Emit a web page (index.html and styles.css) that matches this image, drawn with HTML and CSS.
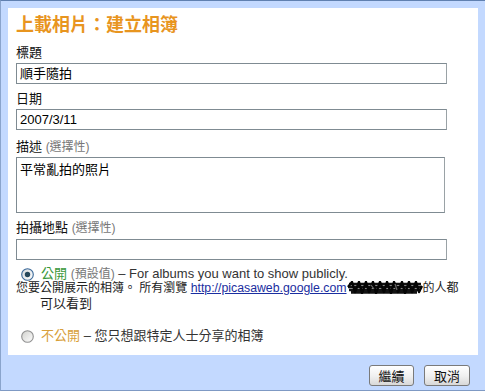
FILE: index.html
```html
<!DOCTYPE html>
<html lang="zh-Hant">
<head>
<meta charset="utf-8">
<title>上載相片：建立相簿</title>
<link rel="stylesheet" href="styles.css">
</head>
<body>
<div class="frame">
  <div class="panel">
    <h1 class="title">上載相片：建立相簿</h1>
    <div class="field f1">
      <label class="label">標題</label>
      <div class="input">順手隨拍</div>
    </div>
    <div class="field f2">
      <label class="label">日期</label>
      <div class="input">2007/3/11</div>
    </div>
    <div class="field f3">
      <label class="label">描述 <span class="opt">(選擇性)</span></label>
      <div class="input textarea">平常亂拍的照片</div>
    </div>
    <div class="field f4">
      <label class="label">拍攝地點 <span class="opt">(選擇性)</span></label>
      <div class="input"></div>
    </div>
    <div class="radio-row first">
      <svg class="radio" width="13" height="13" viewBox="0 0 13 13">
        <defs>
          <linearGradient id="rg1" x1="0" y1="0" x2="1" y2="1">
            <stop offset="0" stop-color="#d4d8dc"/>
            <stop offset="1" stop-color="#ffffff"/>
          </linearGradient>
        </defs>
        <circle cx="6.5" cy="6.5" r="5.8" fill="url(#rg1)" stroke="#3a6898" stroke-width="1.1"/>
        <circle cx="6.5" cy="6.5" r="2.7" fill="#24465a"/>
      </svg>
      <span class="pub">公開</span>&nbsp;<span class="opt">(預設值)</span>&nbsp;<span class="desc">– For albums you want to show publicly.</span>
    </div>
    <div class="note">您要公開展示的相簿。 所有瀏覽 <a class="link" href="#">http://picasaweb.google.com</a><svg class="scribble" width="76" height="13" viewBox="0 0 76 13"><path d="M2 3 H74 M1 6 H75 M2 9 H74 M4 11.5 H70" stroke="#121212" stroke-width="2.6" fill="none"/><path d="M1 6 L5 1 L8 11 L12 1 L15 12 L19 1 L22 11 L26 1 L29 12 L33 1 L37 11 L40 1 L44 12 L47 1 L51 11 L55 1 L58 12 L62 1 L65 11 L69 1 L72 11 L75 5" stroke="#050505" stroke-width="2.4" fill="none" stroke-linejoin="round"/><path d="M24 4 L27 8 M48 3 L50 9" stroke="#6a6a6a" stroke-width="1.2" fill="none"/></svg>的人都<br><span class="indent">可以看到</span></div>
    <div class="radio-row second">
      <svg class="radio" width="13" height="13" viewBox="0 0 13 13">
        <defs>
          <linearGradient id="rg2" x1="0" y1="0" x2="1" y2="1">
            <stop offset="0" stop-color="#d0d0cc"/>
            <stop offset="1" stop-color="#ffffff"/>
          </linearGradient>
        </defs>
        <circle cx="6.5" cy="6.5" r="5.8" fill="url(#rg2)" stroke="#909090" stroke-width="1.1"/>
      </svg>
      <span class="priv">不公開</span>&nbsp;<span class="desc">– 您只想跟特定人士分享的相簿</span>
    </div>
  </div>
  <div class="footer">
    <button class="btn b1">繼續</button>
    <button class="btn b2">取消</button>
  </div>
</div>
</body>
</html>
```

FILE: styles.css
```css
html, body {
  margin: 0;
  padding: 0;
}
body {
  width: 485px;
  height: 391px;
  overflow: hidden;
  background: #c3d9ff;
  font-family: "Liberation Sans", "Noto Sans CJK TC", sans-serif;
  font-size: 13px;
  color: #222;
}
.frame {
  box-sizing: border-box;
  width: 485px;
  height: 391px;
  border-top: 1px solid #6080b0;
  border-left: 1px solid #8aa4cc;
  border-bottom: 1px solid #7f9ac4;
  padding: 7px 7px 0 7px;
  display: flex;
  flex-direction: column;
}
.panel {
  background: #fff;
  height: 347px;
  box-sizing: border-box;
  padding: 7px 0 0 8px;
}
.title {
  margin: 0;
  font-size: 18px;
  line-height: 20px;
  font-weight: bold;
  color: #e8951f;
}
.field {
  display: flex;
  flex-direction: column;
}
.label {
  line-height: 16px;
  font-size: 13px;
  color: #111;
  margin-bottom: 2px;
}
.f1 .label { margin-top: 10px; }
.f2 .label { margin-top: 7px; }
.f3 .label { margin-top: 9px; }
.f4 .label { margin-top: 7px; margin-bottom: 3px; }
.opt {
  color: #777;
  font-size: 12px;
}
.input {
  box-sizing: border-box;
  width: 431px;
  height: 21px;
  border: 1px solid #7f8b92;
  border-right-color: #9aa2a6;
  padding: 1px 3px;
  line-height: 17px;
  font-size: 13px;
  color: #000;
}
.textarea {
  width: 429px;
  height: 56px;
  padding-top: 3px;
}
.radio-row {
  display: flex;
  align-items: center;
  height: 14px;
  padding-left: 5px;
  line-height: 14px;
}
.radio-row.first {
  margin-top: 7px;
}
.radio-row.second {
  margin-top: 17px;
}
.radio {
  margin-right: 7px;
  flex: none;
}
.pub {
  color: #3a983a;
}
.priv {
  color: #d8a03a;
}
.desc {
  color: #333;
}
.note {
  line-height: 15px;
  font-size: 12px;
  color: #222;
  white-space: nowrap;
}
.indent {
  padding-left: 24px;
  font-size: 13px;
}
.link {
  color: #1a2ea0;
  text-decoration: underline;
  font-size: 12.3px;
}
.scribble {
  vertical-align: -2px;
}
.footer {
  display: flex;
  justify-content: flex-end;
  gap: 10px;
  padding: 10px 8px 0 0;
}
.btn {
  box-sizing: border-box;
  height: 21px;
  padding: 0;
  border: 1px solid #7a7a7a;
  border-radius: 3px;
  background: linear-gradient(#ffffff, #efefef 55%, #d8d8d8);
  font-family: "Liberation Sans", "Noto Sans CJK TC", sans-serif;
  font-size: 13px;
  color: #111;
}
.b1 { width: 45px; }
.b2 { width: 46px; }
```
